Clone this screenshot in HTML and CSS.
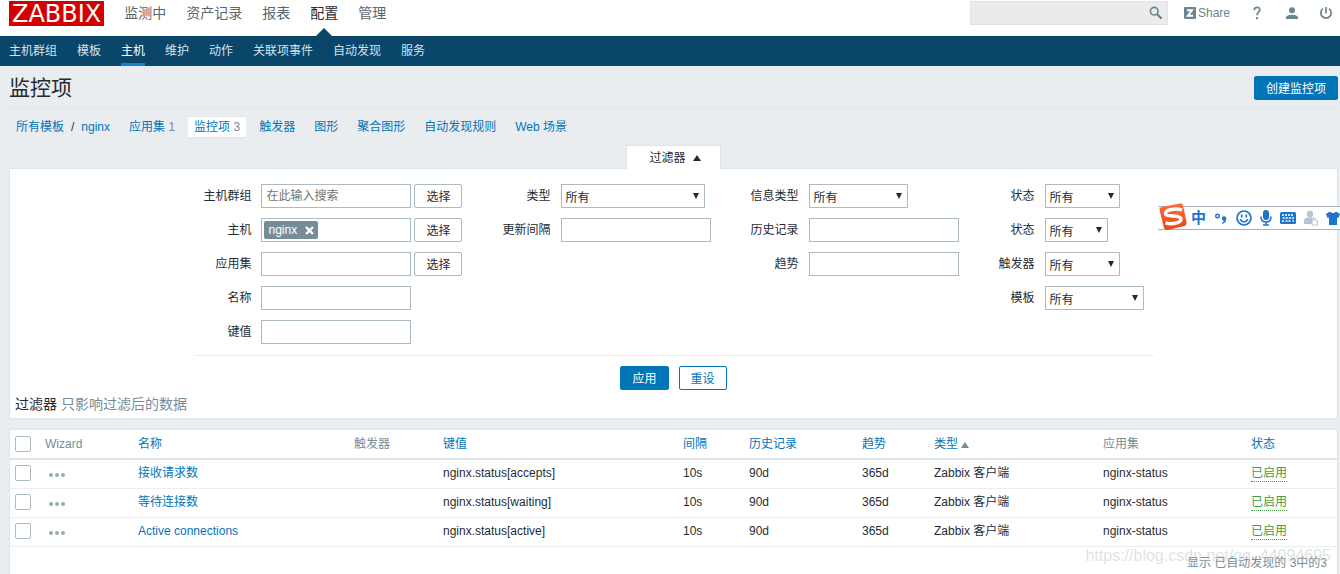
FILE: index.html
```html
<!DOCTYPE html>
<html lang="zh-CN">
<head>
<meta charset="utf-8">
<title>监控项</title>
<link rel="stylesheet" href="styles.css">
</head>
<body>
<header class="top">
  <a class="logo" href="#">ZABBIX</a>
  <nav class="main-nav">
    <a href="#">监测中</a>
    <a href="#">资产记录</a>
    <a href="#">报表</a>
    <a href="#" class="active">配置</a>
    <a href="#">管理</a>
  </nav>
  <form class="search">
    <input type="text" aria-label="Search">
    <button type="button" aria-label="Search">
      <svg width="14" height="14" viewBox="0 0 14 14" fill="none" stroke="#6d8590"><circle cx="5.2" cy="5.2" r="3.8" stroke-width="1.6"/><path d="M8 8l4.6 4.6" stroke-width="2.2"/></svg>
    </button>
  </form>
  <div class="user-nav">
    <a href="#" class="share">
      <svg width="12" height="12" viewBox="0 0 12 12"><rect width="12" height="12" rx="1" fill="#6d8590"/><path d="M3 3.200h5L3.800 8.800H9" fill="none" stroke="#fff" stroke-width="1.900"/></svg>
      Share
    </a>
    <a href="#" class="help" aria-label="Help"><svg width="8" height="14" viewBox="0 0 8 14" fill="none" stroke="#6d8590" stroke-width="1.8"><path d="M1.2 4.2C1.2 .4 7 .4 6.8 3.8 6.7 6 4 6.200 4 9.200"/><path d="M4 11v2.200"/></svg></a>
    <a href="#" aria-label="User"><svg width="14" height="14" viewBox="0 0 14 14" fill="#6d8590"><circle cx="7" cy="4.200" r="3"/><path d="M1 13v-1.500C1 9.500 4.500 8.700 7 8.700s6 .8 6 2.800V13z"/></svg></a>
    <a href="#" aria-label="Sign out"><svg width="14" height="14" viewBox="0 0 14 14" fill="none" stroke="#6d8590" stroke-width="1.700"><path d="M7 1v6.500"/><path d="M4 2.600a5.200 5.200 0 1 0 6 0"/></svg></a>
  </div>
</header>
<nav class="sub-nav">
  <a href="#">主机群组</a>
  <a href="#">模板</a>
  <a href="#" class="active">主机</a>
  <a href="#">维护</a>
  <a href="#">动作</a>
  <a href="#">关联项事件</a>
  <a href="#">自动发现</a>
  <a href="#">服务</a>
</nav>

<main class="page">
  <div class="title-row">
    <h1>监控项</h1>
    <button type="button" class="btn primary">创建监控项</button>
  </div>
  <nav class="crumbs">
    <span class="path"><a href="#">所有模板</a><span>/</span><a href="#">nginx</a></span>
    <span class="crumb"><a href="#">应用集</a> <em>1</em></span>
    <span class="crumb selected"><a href="#">监控项</a> <em>3</em></span>
    <a class="crumb" href="#">触发器</a>
    <a class="crumb" href="#">图形</a>
    <a class="crumb" href="#">聚合图形</a>
    <a class="crumb" href="#">自动发现规则</a>
    <a class="crumb" href="#">Web 场景</a>
  </nav>

  <div class="filter-tab"><button type="button">过滤器 <i class="tri up"></i></button></div>
  <form class="filter">
    <div class="fields">
      <div class="group">
        <label for="hostgroup">主机群组</label>
        <div class="pick"><input id="hostgroup" type="text" placeholder="在此输入搜索"><button type="button" class="btn plain">选择</button></div>
        <label for="host">主机</label>
        <div class="pick">
          <div class="multi"><span class="tag">nginx <button type="button" aria-label="Remove nginx"><svg width="9" height="9" viewBox="0 0 9 9" stroke="#fff" stroke-width="2.400"><path d="M1 1l7 7M8 1L1 8"/></svg></button></span><input id="host" type="text"></div>
          <button type="button" class="btn plain">选择</button>
        </div>
        <label for="app">应用集</label>
        <div class="pick"><input id="app" type="text"><button type="button" class="btn plain">选择</button></div>
        <label for="name">名称</label>
        <input id="name" type="text">
        <label for="key">键值</label>
        <input id="key" type="text">
      </div>
      <div class="group">
        <label for="type">类型</label>
        <span class="select w-l"><select id="type"><option>所有</option></select></span>
        <label for="interval">更新间隔</label>
        <input id="interval" type="text">
      </div>
      <div class="group">
        <label for="info">信息类型</label>
        <span class="select w-m"><select id="info"><option>所有</option></select></span>
        <label for="history">历史记录</label>
        <input id="history" type="text">
        <label for="trend">趋势</label>
        <input id="trend" type="text">
      </div>
      <div class="group">
        <label for="state">状态</label>
        <span class="select w-s"><select id="state"><option>所有</option></select></span>
        <label for="status">状态</label>
        <span class="select w-xs"><select id="status"><option>所有</option></select></span>
        <label for="trigger">触发器</label>
        <span class="select w-s"><select id="trigger"><option>所有</option></select></span>
        <label for="template">模板</label>
        <span class="select w-m"><select id="template"><option>所有</option></select></span>
      </div>
    </div>
    <div class="actions">
      <button type="button" class="btn primary">应用</button>
      <button type="button" class="btn outline">重设</button>
    </div>
    <p class="hint"><strong>过滤器</strong> 只影响过滤后的数据</p>
  </form>

  <section class="list">
    <table>
      <colgroup><col class="c-check"><col class="c-wizard"><col class="c-name"><col class="c-trigger"><col class="c-key"><col class="c-interval"><col class="c-history"><col class="c-trend"><col class="c-type"><col class="c-apps"><col class="c-status"></colgroup>
      <thead>
        <tr>
          <th><input type="checkbox" aria-label="全选"></th>
          <th>Wizard</th>
          <th><a href="#">名称</a></th>
          <th>触发器</th>
          <th><a href="#">键值</a></th>
          <th><a href="#">间隔</a></th>
          <th><a href="#">历史记录</a></th>
          <th><a href="#">趋势</a></th>
          <th><a href="#">类型 <i class="tri sort"></i></a></th>
          <th>应用集</th>
          <th><a href="#">状态</a></th>
        </tr>
      </thead>
      <tbody>
        <tr>
          <td><input type="checkbox" aria-label="接收请求数"></td>
          <td><button type="button" class="dots" aria-label="Wizard"><i></i><i></i><i></i></button></td>
          <td><a href="#">接收请求数</a></td><td></td>
          <td>nginx.status[accepts]</td><td>10s</td><td>90d</td><td>365d</td><td>Zabbix 客户端</td><td>nginx-status</td>
          <td><a href="#" class="on">已启用</a></td>
        </tr>
        <tr>
          <td><input type="checkbox" aria-label="等待连接数"></td>
          <td><button type="button" class="dots" aria-label="Wizard"><i></i><i></i><i></i></button></td>
          <td><a href="#">等待连接数</a></td><td></td>
          <td>nginx.status[waiting]</td><td>10s</td><td>90d</td><td>365d</td><td>Zabbix 客户端</td><td>nginx-status</td>
          <td><a href="#" class="on">已启用</a></td>
        </tr>
        <tr>
          <td><input type="checkbox" aria-label="Active connections"></td>
          <td><button type="button" class="dots" aria-label="Wizard"><i></i><i></i><i></i></button></td>
          <td><a href="#">Active connections</a></td><td></td>
          <td>nginx.status[active]</td><td>10s</td><td>90d</td><td>365d</td><td>Zabbix 客户端</td><td>nginx-status</td>
          <td><a href="#" class="on">已启用</a></td>
        </tr>
      </tbody>
    </table>
    <p class="total">显示 已自动发现的 3中的3</p>
  </section>
</main>

<aside class="ime">
  <svg class="ime-logo" width="30" height="30" viewBox="0 0 30 30">
    <defs><linearGradient id="flame" x1="0" y1="0" x2="0" y2="1"><stop offset="0" stop-color="#f9703a"/><stop offset="1" stop-color="#ee4412"/></linearGradient></defs>
    <path d="M4 5L22 1.400Q24.500 1 25 3.500L28.600 20Q29 23 26.500 24L10 28Q7 28.500 6 26L1.500 8Q1 5.600 4 5z" fill="url(#flame)"/>
    <path d="M24 8C18 6 7.500 7.500 7.500 11.500 7.500 15.500 23 12.500 23 17 23 21.500 13 22.500 7.500 21" fill="none" stroke="#fff" stroke-width="3.400"/>
  </svg>
  <b>中</b>
  <svg width="14" height="16" viewBox="0 0 14 16"><circle cx="3.500" cy="6" r="1.800" fill="none" stroke="#1e74cc" stroke-width="1.400"/><circle cx="10" cy="8.500" r="2.200" fill="#1e74cc"/><path d="M12.200 8.500q.3 4-4 5.500l-.3-1q2-1.200 2.100-3z" fill="#1e74cc"/></svg>
  <svg width="16" height="16" viewBox="0 0 16 16" fill="none" stroke="#1e74cc" stroke-width="1.700"><circle cx="8" cy="8" r="7"/><path d="M5.700 4.500v3M10.300 4.500v3M4 9.200q4 5.600 8 0" /></svg>
  <svg width="12" height="16" viewBox="0 0 12 16"><rect x="3" y="0" width="6" height="10" rx="3" fill="#1e74cc"/><path d="M1 6.500q0 5.500 5 5.500t5-5.500M6 12v3M3 15h6" fill="none" stroke="#1e74cc" stroke-width="1.600"/></svg>
  <svg width="16" height="12" viewBox="0 0 16 12"><rect width="16" height="12" rx="1.500" fill="#1e74cc"/><path d="M2 3h12M2.800 6h11M2 9h2M5.500 9h5.500M12.500 9H14" stroke="#fff" stroke-width="1.500" stroke-dasharray="2 1"/></svg>
  <svg width="14" height="16" viewBox="0 0 14 16" fill="#b7c2d6"><circle cx="6" cy="4" r="3.200"/><path d="M0 14V11q0-3 3-3.500h6q1.500.3 2 1.500H8v5z"/><path d="M9 11V9h3v2h1.500v4H8v-4z" fill="#fff" stroke="#b7c2d6"/></svg>
  <svg width="14" height="14" viewBox="0 0 14 14" fill="#1e74cc"><path d="M4 .5q3 3 6 0L14 3l-1.500 4-1.500-.5V14H3V6.500L1.500 7 0 3z"/></svg>
</aside>
<div class="watermark">https://blog.csdn.net/qq_44094695</div>
</body>
</html>
```
FILE: styles.css
```css
* { box-sizing: border-box; }
html { height: 100%; overflow: hidden; }
body {
  position: relative;
  display: flex;
  flex-direction: column;
  height: 100%;
  margin: 0;
  overflow: hidden;
  background: #e9edf0;
  color: #1f2c33;
  font: 12px/18px "Liberation Sans", "Noto Sans CJK SC", sans-serif;
}
a { color: #0275b8; text-decoration: none; }
button, input, select { font: inherit; color: inherit; }
button { padding: 0; border: 0; background: none; cursor: pointer; }
svg { display: block; flex: none; }

.top {
  display: flex;
  flex: none;
  height: 36px;
  padding: 1px 7px 10px 9px;
  background: #fff;
}
.logo {
  height: 25px;
  padding: 0 3px;
  background: #d40000;
  color: #fff;
  font: 24px/27px "DejaVu Sans", sans-serif;
}
.main-nav { display: flex; gap: 20px; margin-left: 20px; }
.main-nav a { position: relative; color: #5a666d; font-size: 14px; line-height: 24px; }
.main-nav .active { color: #1f2c33; }
.main-nav .active::after {
  content: "";
  position: absolute;
  top: 27px;
  left: 50%;
  margin-left: -8px;
  border: 8px solid transparent;
  border-top: 0;
  border-bottom-color: #0a466a;
}
.search {
  display: flex;
  align-items: center;
  width: 198px;
  height: 24px;
  margin-left: auto;
  padding-right: 4px;
  border: 1px solid #e2e2e2;
  background: #ebebeb;
}
.search input { flex: 1; min-width: 0; border: 0; background: none; }
.user-nav { display: flex; gap: 20px; align-items: center; height: 24px; margin-left: 16px; }
.share { display: flex; gap: 2px; align-items: center; color: #6d8590; }
.help { padding: 0 4px 0 3px; }

.sub-nav { display: flex; flex: none; gap: 20px; height: 30px; padding: 0 9px; background: #0a466a; }
.sub-nav a { height: 30px; color: #d5e2ea; line-height: 30px; }
.sub-nav .active { border-bottom: 3px solid #1284cc; color: #fff; }

.page { display: flex; flex: 1; flex-direction: column; padding: 0 2px 0 9px; }
.title-row {
  display: flex;
  align-items: center;
  justify-content: space-between;
  height: 42px;
  margin-bottom: 8px;
  padding-top: 3px;
  border-bottom: 1px solid #dfe4e7;
}
h1 { margin: 0; font-size: 21px; font-weight: 400; line-height: 24px; }
.btn { height: 24px; padding: 1px 11px 0; border: 1px solid #0275b8; border-radius: 2px; line-height: 22px; }
.btn.primary { background: #0275b8; color: #fff; }
.btn.outline { background: #fff; color: #0275b8; }
.btn.plain { border-color: #acbbc2; background: #fff; }

.crumbs { display: flex; gap: 7px; height: 22px; padding-left: 1px; line-height: 20px; }
.path, .crumb { padding: 0 6px; border: 1px solid transparent; border-width: 1px 0; border-radius: 2px; }
.path { display: flex; gap: 7px; }
.crumb em { color: #768d99; font-style: normal; }
.crumb.selected { border-color: #dfe4e7; background: #fff; }

.filter-tab { z-index: 1; display: flex; justify-content: center; margin: 7px 0 -2px; }
.filter-tab button {
  display: flex;
  gap: 7px;
  align-items: center;
  height: 25px;
  padding: 0 19px 0 22px;
  border: 1px solid #dfe4e7;
  border-bottom: 0;
  background: #fff;
}
.tri { display: inline-block; border: 4px solid transparent; border-top: 0; border-bottom: 6px solid; }
.tri.sort { color: #768d99; }

.filter { padding: 15px 0 4px; border: 1px solid #dfe4e7; background: #fff; }
.fields {
  display: flex;
  gap: 40px;
  justify-content: center;
  max-width: 960px;
  margin: 0 auto;
  padding-bottom: 11px;
  border-bottom: 1px solid #ebeef0;
}
.group { display: grid; grid-template-columns: auto auto; grid-auto-rows: 24px; gap: 10px; align-content: start; }
.group label { text-align: right; line-height: 24px; }
.group input, .multi { width: 150px; height: 24px; padding: 0 4px; border: 1px solid #acbbc2; background: #fff; outline: 0; }
.group ::placeholder { color: #757575; opacity: 1; }
.pick { display: flex; gap: 3px; }
.multi { display: flex; align-items: center; padding: 0 2px; }
.multi input { flex: 1; width: 0; height: 20px; border: 0; }
.tag {
  display: flex;
  gap: 8px;
  align-items: center;
  height: 18px;
  padding: 0 4px;
  border-radius: 2px;
  background: #768d99;
  color: #fff;
}
.select { position: relative; }
.select::after {
  content: "";
  position: absolute;
  top: 9px;
  right: 6px;
  border: 3px solid transparent;
  border-top: 6px solid #1f2c33;
  border-bottom: 0;
  pointer-events: none;
}
.select select {
  display: block;
  width: 100%;
  height: 24px;
  padding: 3px 4px 0;
  border: 1px solid #acbbc2;
  border-radius: 0;
  background: #fff;
  appearance: none;
}
.w-l { width: 144px; }
.w-m { width: 99px; }
.w-s { width: 75px; }
.w-xs { width: 63px; }
.actions { display: flex; gap: 10px; justify-content: center; padding-top: 10px; }
.hint { margin: 4px 0 0; padding: 0 5px; color: #768d99; font-size: 14px; line-height: 20px; }
.hint strong { color: #1f2c33; font-weight: 400; }

.list { flex: 1; margin-top: 10px; border: 1px solid #dfe4e7; border-bottom: 0; background: #fff; }
table { width: 100%; table-layout: fixed; border-collapse: collapse; }
th, td { height: 29px; padding: 0 5px; border-bottom: 1px solid #ebeef0; font-weight: 400; text-align: left; white-space: nowrap; }
th { height: 29px; padding-bottom: 1px; border-bottom: 2px solid #dfe4e7; color: #768d99; }
td { padding-bottom: 1px; }
.c-check { width: 30px; }
.c-wizard { width: 93px; }
.c-name { width: 216px; }
.c-trigger { width: 89px; }
.c-key { width: 240px; }
.c-interval { width: 66px; }
.c-history { width: 113px; }
.c-trend { width: 72px; }
.c-type { width: 169px; }
.c-apps { width: 148px; }
.c-status { width: 91px; }
table input {
  display: block;
  width: 16px;
  height: 16px;
  margin: 0;
  border: 1px solid #acbbc2;
  border-radius: 2px;
  background: #fff;
  appearance: none;
}
.dots { display: flex; gap: 2px; padding: 4px 4px 0; }
.dots i { width: 4px; height: 4px; border-radius: 50%; background: #97aab3; }
.on { display: inline-block; border-bottom: 1px dotted #429e47; color: #429e47; line-height: 15px; }
.total { margin: 0; padding: 7px 10px; color: #768d99; text-align: right; }

.ime {
  position: absolute;
  top: 206px;
  right: 0;
  display: flex;
  gap: 8px;
  align-items: center;
  height: 24px;
  padding-left: 33px;
  border: 1px solid #a9afba;
  border-width: 1px 0;
  background: linear-gradient(#fff, #fff) 20px 0 no-repeat;
}
.ime-logo { position: absolute; top: -5px; left: 0; }
.ime b { color: #1e74cc; font-size: 15px; line-height: 20px; }
.watermark {
  position: absolute;
  top: 546px;
  right: 9px;
  color: rgba(190, 190, 190, .45);
  font-size: 16px;
  line-height: 20px;
  pointer-events: none;
}
```
